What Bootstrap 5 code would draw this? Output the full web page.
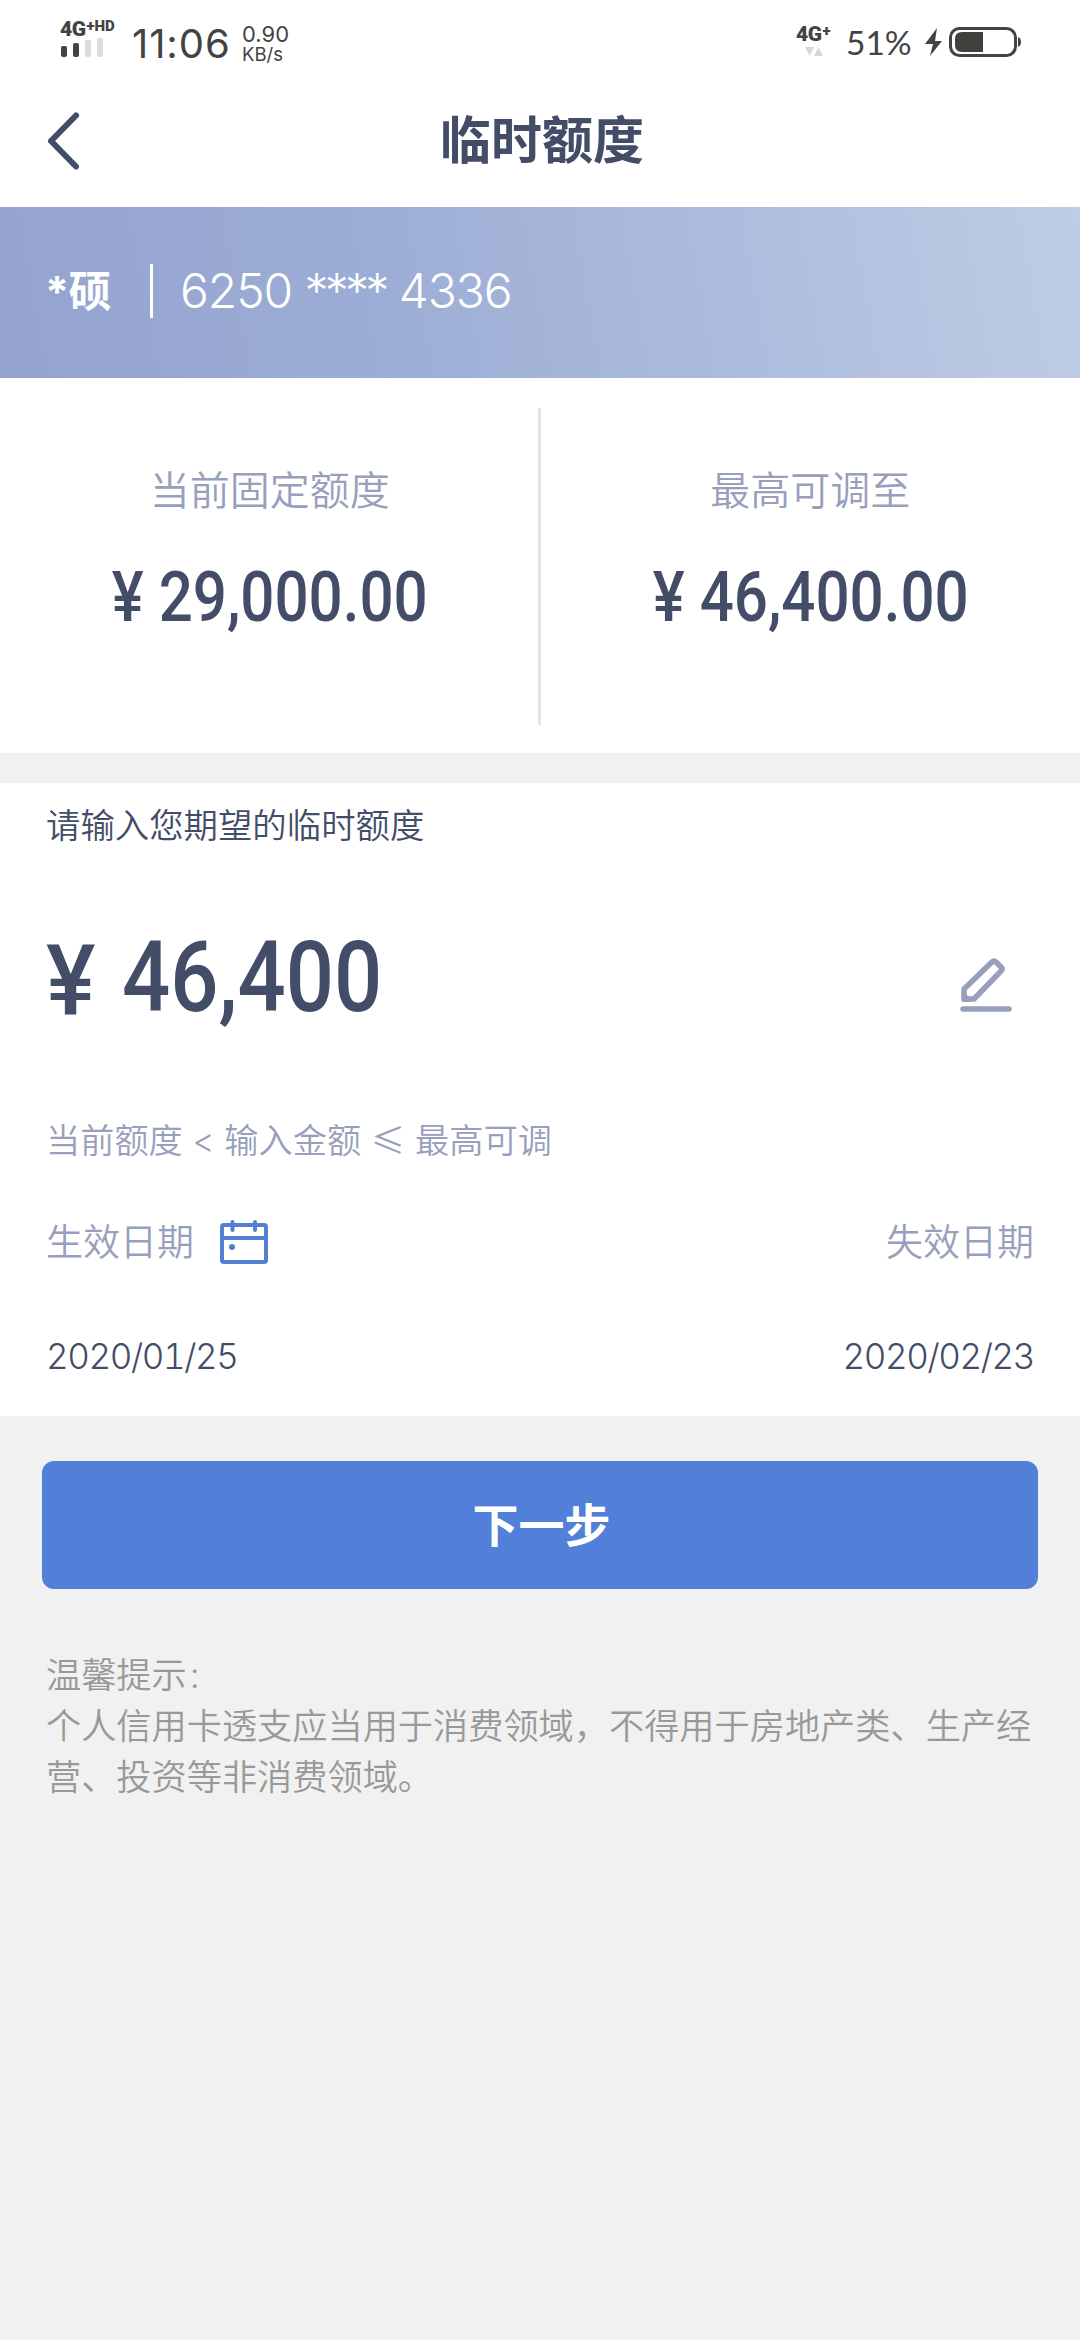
<!DOCTYPE html>
<html lang="zh-CN">
<head>
<meta charset="utf-8">
<meta name="viewport" content="width=device-width, initial-scale=1">
<title>临时额度</title>
<link href="https://cdn.jsdelivr.net/npm/bootstrap@5.3.0/dist/css/bootstrap.min.css" rel="stylesheet">
<style>
:root{--ink:#434d67;--muted:#989fbd;--page:#f1f1f1}
body{background:var(--page);color:var(--ink);font-family:Inter,"Noto Sans CJK SC",sans-serif;font-weight:350;white-space:nowrap;overflow-x:hidden}
svg{display:block;flex:none}
.statusbar{height:84px;color:#434343;padding:0 59px 0 60px}
.net{width:60px;height:38px;margin-top:20px}
.net-label{font:900 21px/18px Roboto,sans-serif;height:18px;letter-spacing:-.5px}
.net-label sup{font-size:15px;line-height:1;top:-5px;letter-spacing:0;margin-left:1px}
.clock{font-size:40px;line-height:40px;font-weight:400;margin:24px 0 0 12px;width:99px;letter-spacing:.9px}
.rate{margin:23px 0 0 11px;font-weight:400}
.rate div:first-child{font-size:22px;line-height:23px}
.rate div:last-child{font-size:18.5px;line-height:17px}
.updown{margin-top:25px}
.pct{font:400 33.5px/36px Lato,sans-serif;margin:24px 0 0 14px;width:76px}
.titlebar{height:123px;padding:0 46px 9px}
.titlebar h1{font-size:51px;line-height:60px;font-weight:700;padding-left:4px}
.side{width:48px}
.cardstrip{height:171px;padding:0 45px;color:#fff;background:linear-gradient(80deg,#94a3cf 0%,#9cadd5 35%,#bfcce5 100%)}
.owner{font-size:43px;font-weight:700;width:105px;line-height:60px;margin-top:-4px;letter-spacing:-.5px}
.rule{width:3px;height:54px;background:#fff;margin-top:-3px}
.cardno{font-size:48px;line-height:60px;margin:-3px 0 0 27px;letter-spacing:-1.1px;font-weight:300}
.cardno span{letter-spacing:-3.800px;padding-right:1px}
.limits{height:375px;padding-top:30px}
.limit-col{padding-top:53px}
.vline{width:3px;height:317px;background:#e4e4e8;margin-left:-2px}
.caption{font-size:40px;line-height:60px;color:var(--muted)}
.din{font-family:Roboto,sans-serif;font-weight:500}
.din-md{font-size:70px;line-height:80px;margin-top:36px;transform:scaleX(.858)}
.entry{margin-top:30px;height:633px;padding:18px 46px 0}
.prompt{font-size:34.4px;line-height:50px}
.din-lg{font-size:98px;line-height:110px}
.yen,.sum{display:inline-block;transform-origin:0 50%}
.yen{transform:scaleX(.95);width:76px;padding-top:3px}
.sum{transform:scaleX(.866)}
.amount{margin-top:73px;height:110px}
.pencil{margin-right:22px;margin-top:9px}
.hint{font-size:34.2px;line-height:50px;height:50px;margin-top:79px;color:var(--muted)}
.leq{display:inline-block;width:54px;text-align:center;font-family:"Noto Sans CJK SC",sans-serif}
.dates{font-size:37px;line-height:56px;margin-top:52px;color:var(--muted)}
.values{font-size:35px;line-height:44px;margin-top:63px;font-variant-numeric:tabular-nums;letter-spacing:-1.4px}
.next{margin:45px 42px 0;height:128px;width:996px;border-radius:12px;font-size:46px;font-weight:700;background:#527fd7;--bs-btn-color:#fff;--bs-btn-bg:#527fd7;border:0;padding:0 0 0 3px}
.tips{padding:61px 46px 0;font-size:35.2px;line-height:51px;color:#999}
.colon{padding-left:3px}
</style>
<script src="https://cdn.jsdelivr.net/npm/bootstrap@5.3.0/dist/js/bootstrap.bundle.min.js"></script>
</head>
<body>
<header class="bg-white">
  <div class="statusbar d-flex align-items-start">
    <div class="net">
      <div class="net-label">4G<sup>+HD</sup></div>
      <svg width="46" height="20" viewBox="0 0 46 20"><g fill="#434343"><rect x="1" y="8" width="6" height="11" rx="2"/><rect x="13" y="5" width="6" height="14" rx="2"/></g><g fill="#dcdcdc"><rect x="25" y="2" width="6" height="17" rx="2"/><rect x="37" y="0" width="6" height="19" rx="2"/></g></svg>
    </div>
    <div class="clock">11:06</div>
    <div class="rate"><div>0.90</div><div>KB/s</div></div>
    <div class="ms-auto updown">
      <div class="net-label">4G<sup>+</sup></div>
      <svg width="36" height="14" viewBox="0 0 36 14"><path d="M9 4h9l-4.500 9zM18 13h9l-4.500-9z" fill="#d8d8d8"/></svg>
    </div>
    <div class="pct">51%</div>
    <svg class="mt-4" width="99" height="34" viewBox="0 0 99 34"><path d="M14 4L2 20h8L7 32l12-15h-7z" fill="#434343" transform="translate(1 0)"/><rect x="28.500" y="4.500" width="65" height="27" rx="9" fill="none" stroke="#434343" stroke-width="3"/><path d="M40 8h21v20H40q-7 0-7-7v-6q0-7 7-7z" fill="#40403c"/><path d="M96 13q3 1 3 5t-3 5z" fill="#434343"/></svg>
  </div>
  <div class="titlebar d-flex align-items-center justify-content-between">
    <div class="side"><svg width="34" height="60" viewBox="0 0 34 60"><path d="M30 4.500L5 30l25 25.500" fill="none" stroke="#434d67" stroke-width="6" stroke-linecap="round" stroke-linejoin="round"/></svg></div>
    <h1 class="m-0">临时额度</h1>
    <div class="side"></div>
  </div>
</header>
<section class="cardstrip d-flex align-items-center">
  <div class="owner">*硕</div><div class="rule"></div><div class="cardno">6250 <span>****</span> 4336</div>
</section>
<section class="limits bg-white d-flex text-center">
  <div class="limit-col col"><div class="caption">当前固定额度</div><div class="din din-md">¥ 29,000.00</div></div>
  <div class="vline"></div>
  <div class="limit-col col"><div class="caption">最高可调至</div><div class="din din-md">¥ 46,400.00</div></div>
</section>
<section class="entry bg-white">
  <div class="prompt">请输入您期望的临时额度</div>
  <div class="amount d-flex justify-content-between align-items-center">
    <div class="din din-lg d-flex"><span class="yen">¥</span><span class="sum">46,400</span></div>
    <svg class="pencil" width="52" height="56" viewBox="0 0 52 56"><path d="M4 33v10h10L41 15q2-2 0-4l-5-5q-2-2-4 0z" fill="none" stroke="#989fbd" stroke-width="5.500" stroke-linejoin="round"/><path d="M2 34l9 9v3H2z" fill="#989fbd"/><path d="M3 53h46" stroke="#989fbd" stroke-width="5.500" stroke-linecap="round"/></svg>
  </div>
  <div class="hint">当前额度 &lt; 输入金额<span class="leq">≤</span>最高可调</div>
  <div class="dates d-flex justify-content-between">
    <div class="d-flex align-items-center">生效日期<svg class="ms-4" width="50" height="48" viewBox="0 0 50 48"><g fill="none" stroke="#527fd0" stroke-width="4"><rect x="4" y="6" width="44" height="37" rx="2"/><path d="M4 19h44"/><path d="M14.500 3v8M37 3v8" stroke-linecap="round"/></g><circle cx="14" cy="28" r="3" fill="#527fd0"/></svg></div>
    <div>失效日期</div>
  </div>
  <div class="values d-flex justify-content-between"><div>2020/01/25</div><div>2020/02/23</div></div>
</section>
<button type="button" class="btn btn-primary next">下一步</button>
<section class="tips">
  <div>温馨提示<span class="colon">:</span></div>
  <div>个人信用卡透支应当用于消费领域，不得用于房地产类、生产经</div>
  <div>营、投资等非消费领域。</div>
</section>
</body>
</html>
